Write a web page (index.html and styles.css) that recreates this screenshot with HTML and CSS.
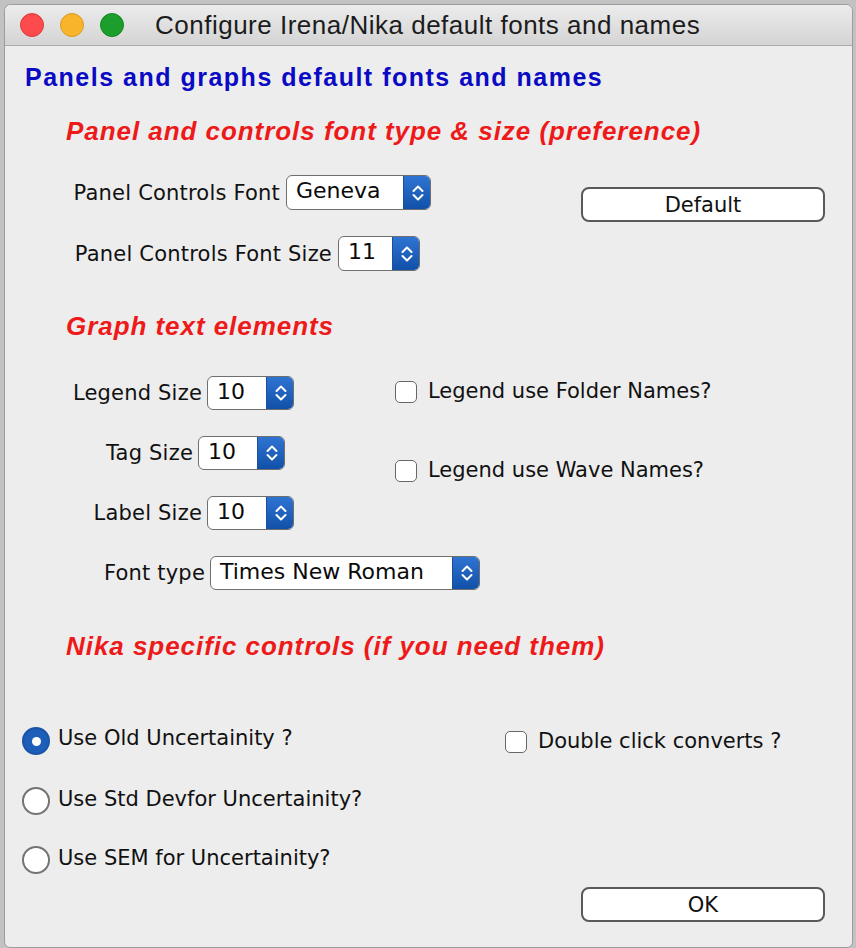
FILE: index.html
```html
<!DOCTYPE html>
<html>
<head>
<meta charset="utf-8">
<title>Configure Irena/Nika default fonts and names</title>
<link rel="stylesheet" href="styles.css">
</head>
<body>
<div class="window">
  <div class="titlebar">
    <span class="light light-red"></span>
    <span class="light light-yellow"></span>
    <span class="light light-green"></span>
    <span class="title">Configure Irena/Nika default fonts and names</span>
  </div>
  <div class="content">
    <h1 class="h-blue">Panels and graphs default fonts and names</h1>

    <h2 class="h-red h-red1">Panel and controls font type &amp; size (preference)</h2>
    <div class="sec1">
      <div class="sec1-left">
        <div class="row">
          <span class="lbl lbl-font">Panel Controls Font</span>
          <div class="popup pw-geneva"><span class="val">Geneva</span><span class="stepper"><svg width="14" height="22" viewBox="0 0 14 22"><path d="M2.5 9 L7 4.5 L11.5 9 M2.5 13 L7 17.5 L11.5 13" fill="none" stroke="#fff" stroke-width="2" stroke-linecap="round" stroke-linejoin="round"/></svg></span></div>
        </div>
        <div class="row row-gap1">
          <span class="lbl lbl-fsize">Panel Controls Font Size</span>
          <div class="popup pw-11"><span class="val">11</span><span class="stepper"><svg width="14" height="22" viewBox="0 0 14 22"><path d="M2.5 9 L7 4.5 L11.5 9 M2.5 13 L7 17.5 L11.5 13" fill="none" stroke="#fff" stroke-width="2" stroke-linecap="round" stroke-linejoin="round"/></svg></span></div>
        </div>
      </div>
      <button class="btn btn-default">Default</button>
    </div>

    <h2 class="h-red h-red2">Graph text elements</h2>
    <div class="sec2">
      <div class="sec2-left">
        <div class="row row-s">
          <span class="lbl lbl-legend">Legend Size</span>
          <div class="popup popup-s pw-num"><span class="val">10</span><span class="stepper"><svg width="14" height="22" viewBox="0 0 14 22"><path d="M2.5 9 L7 4.5 L11.5 9 M2.5 13 L7 17.5 L11.5 13" fill="none" stroke="#fff" stroke-width="2" stroke-linecap="round" stroke-linejoin="round"/></svg></span></div>
        </div>
        <div class="row row-s row-gap2">
          <span class="lbl lbl-tag">Tag Size</span>
          <div class="popup popup-s pw-num"><span class="val">10</span><span class="stepper"><svg width="14" height="22" viewBox="0 0 14 22"><path d="M2.5 9 L7 4.5 L11.5 9 M2.5 13 L7 17.5 L11.5 13" fill="none" stroke="#fff" stroke-width="2" stroke-linecap="round" stroke-linejoin="round"/></svg></span></div>
        </div>
        <div class="row row-s row-gap2">
          <span class="lbl lbl-label">Label Size</span>
          <div class="popup popup-s pw-num"><span class="val">10</span><span class="stepper"><svg width="14" height="22" viewBox="0 0 14 22"><path d="M2.5 9 L7 4.5 L11.5 9 M2.5 13 L7 17.5 L11.5 13" fill="none" stroke="#fff" stroke-width="2" stroke-linecap="round" stroke-linejoin="round"/></svg></span></div>
        </div>
        <div class="row row-s row-gap2">
          <span class="lbl lbl-ftype">Font type</span>
          <div class="popup popup-s pw-times"><span class="val">Times New Roman</span><span class="stepper"><svg width="14" height="22" viewBox="0 0 14 22"><path d="M2.5 9 L7 4.5 L11.5 9 M2.5 13 L7 17.5 L11.5 13" fill="none" stroke="#fff" stroke-width="2" stroke-linecap="round" stroke-linejoin="round"/></svg></span></div>
        </div>
      </div>
      <div class="sec2-right">
        <label class="check check-first"><span class="box"></span><span class="ctext">Legend use Folder Names?</span></label>
        <label class="check check-second"><span class="box"></span><span class="ctext">Legend use Wave Names?</span></label>
      </div>
    </div>

    <h2 class="h-red h-red3">Nika specific controls (if you need them)</h2>
    <div class="sec3">
      <div class="sec3-left">
        <label class="radio-row"><span class="radio radio-on"><span class="dot"></span></span><span class="rtext rtext-up">Use Old Uncertainity ?</span></label>
        <label class="radio-row radio-gap"><span class="radio"></span><span class="rtext">Use Std Devfor Uncertainity?</span></label>
        <label class="radio-row radio-gap2"><span class="radio"></span><span class="rtext">Use SEM for Uncertainity?</span></label>
      </div>
      <div class="sec3-right">
        <label class="check check-dbl"><span class="box"></span><span class="ctext">Double click converts ?</span></label>
        <button class="btn btn-ok">OK</button>
      </div>
    </div>
  </div>
</div>
</body>
</html>
```

FILE: styles.css
```css
html, body {
  margin: 0;
  padding: 0;
}
body {
  background: #c2c2c2;
  width: 856px;
  height: 948px;
  overflow: hidden;
  font-family: "DejaVu Sans", "Liberation Sans", sans-serif;
  color: #111;
}
.window {
  margin: 4px 0 0 4px;
  width: 849px;
  height: 944px;
  box-sizing: border-box;
  border: 1px solid #9c9c9c;
  border-radius: 7px 7px 6px 6px;
  background: #ededed;
  overflow: hidden;
}
.titlebar {
  height: 40px;
  border-bottom: 1px solid #ababab;
  background: linear-gradient(#ececec, #d4d4d4);
  display: flex;
  align-items: center;
  padding-left: 15px;
}
.light {
  width: 24px;
  height: 24px;
  border-radius: 50%;
  box-sizing: border-box;
  margin-right: 16px;
}
.light-red { background: #fc4a4d; border: 1px solid #dc3b3d; }
.light-yellow { background: #f8b42b; border: 1px solid #d99a22; }
.light-green { background: #1c9e2c; border: 1px solid #168525; }
.title {
  margin-left: 15px;
  font-family: "Liberation Sans", Arial, sans-serif;
  font-size: 26px;
  letter-spacing: 0.5px;
  color: #1c1c1c;
  line-height: 40px;
}
.content {
  padding-top: 16px;
}
.h-blue {
  margin: 0 0 0 20px;
  height: 30px;
  line-height: 30px;
  font-family: "Liberation Sans", Arial, sans-serif;
  font-weight: bold;
  font-size: 25px;
  letter-spacing: 1.5px;
  color: #0a0ac4;
}
.h-red {
  margin: 0 0 0 61px;
  height: 30px;
  line-height: 30px;
  font-family: "Liberation Sans", Arial, sans-serif;
  font-weight: bold;
  font-style: italic;
  font-size: 26px;
  letter-spacing: 0.95px;
  color: #ee1a1a;
}
.h-red1 { margin-top: 24px; }
.h-red2 { margin-top: 40px; }
.h-red3 { margin-top: 41px; }

.sec1 {
  display: flex;
  margin-top: 29px;
}
.sec1-left { width: 576px; flex: none; }
.row {
  display: flex;
  align-items: center;
}
.row-gap1 { margin-top: 26px; }
.lbl {
  flex: none;
  font-size: 21px;
  letter-spacing: 0.2px;
  text-align: right;
  white-space: nowrap;
  margin-right: 6px;
}
.lbl-font { width: 275px; }
.lbl-fsize { width: 327px; }
.lbl-legend { width: 197px; margin-right: 5px; }
.lbl-tag { width: 188px; margin-right: 5px; }
.lbl-label { width: 197px; margin-right: 5px; }
.lbl-ftype { width: 200px; margin-right: 5px; }

.popup {
  flex: none;
  display: flex;
  height: 35px;
  box-sizing: border-box;
  border: 1.5px solid #6f6f6f;
  border-radius: 6px;
  background: #fff;
  overflow: hidden;
}
.popup-s { height: 34px; }
.pw-geneva { width: 145px; }
.pw-11 { width: 82px; }
.pw-num { width: 87px; }
.pw-times { width: 270px; }
.val {
  flex: 1;
  padding-left: 9px;
  font-size: 22px;
  line-height: 30px;
  color: #0a0a0a;
  white-space: nowrap;
}
.stepper {
  width: 28px;
  flex: none;
  margin: -1.5px -1.5px -1.5px 0;
  background: linear-gradient(#3075d4, #0f4ea6);
  border-left: 1px solid #1b4f9a;
  display: flex;
  align-items: center;
  justify-content: center;
}

.btn {
  width: 244px;
  height: 35px;
  flex: none;
  box-sizing: border-box;
  border: 2px solid #595959;
  border-radius: 8px;
  background: #fff;
  font-family: "DejaVu Sans", sans-serif;
  font-size: 21px;
  color: #111;
  padding: 0;
  line-height: 30px;
}
.btn-default { margin-top: 12px; }

.sec2 {
  display: flex;
  margin-top: 35px;
}
.sec2-left { width: 390px; flex: none; }
.row-s { height: 34px; }
.row-gap2 { margin-top: 26px; }
.sec2-right {
  display: flex;
  flex-direction: column;
}
.check {
  display: flex;
  align-items: center;
  height: 22px;
}
.check-first { margin-top: 5px; }
.check-second { margin-top: 57px; }
.box {
  width: 22px;
  height: 22px;
  box-sizing: border-box;
  border: 1.5px solid #676767;
  border-radius: 5px;
  background: #fff;
  margin-right: 11px;
  flex: none;
}
.ctext {
  font-size: 21px;
  white-space: nowrap;
  position: relative;
  top: -1px;
}

.sec3 {
  display: flex;
  margin-top: 66px;
}
.sec3-left {
  width: 500px;
  flex: none;
  padding-left: 17px;
  box-sizing: border-box;
  display: flex;
  flex-direction: column;
}
.radio-row {
  display: flex;
  align-items: center;
  height: 28px;
}
.radio-gap { margin-top: 32px; }
.radio-gap2 { margin-top: 31px; }
.radio {
  width: 28px;
  height: 28px;
  box-sizing: border-box;
  border: 2px solid #737373;
  border-radius: 50%;
  background: #fff;
  margin-right: 8px;
  flex: none;
  display: flex;
  align-items: center;
  justify-content: center;
}
.radio-on {
  background: #1d5eb8;
  border-color: #1a54a6;
}
.dot {
  width: 9px;
  height: 9px;
  border-radius: 50%;
  background: #fff;
}
.rtext {
  font-size: 21px;
  white-space: nowrap;
  position: relative;
  top: -2px;
}
.rtext-up { top: -3px; }
.sec3-right {
  display: flex;
  flex-direction: column;
}
.check-dbl { margin-top: 4px; }
.btn-ok {
  margin-top: 134px;
  margin-left: 76px;
}
```
